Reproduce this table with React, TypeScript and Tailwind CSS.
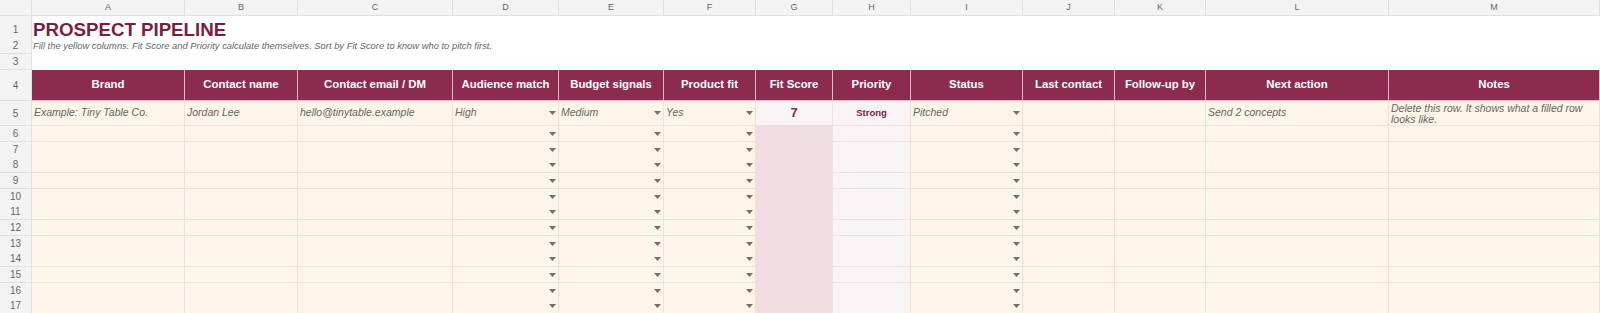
import React from "react";

const GRID =
  "grid grid-cols-[32px_153px_113px_155px_106px_105px_92px_77px_78px_112px_92px_91px_183px_211px]";

const letters = ["A", "B", "C", "D", "E", "F", "G", "H", "I", "J", "K", "L", "M"];

const headers = [
  "Brand",
  "Contact name",
  "Contact email / DM",
  "Audience match",
  "Budget signals",
  "Product fit",
  "Fit Score",
  "Priority",
  "Status",
  "Last contact",
  "Follow-up by",
  "Next action",
  "Notes",
];

// columns with a dropdown chip (D, E, F, I)
const dropdownCols = [3, 4, 5, 8];

function Arrow() {
  return (
    <svg width="7" height="4" viewBox="0 0 7 4" className="shrink-0">
      <polygon points="0,0 7,0 3.5,4" fill="#6f6f72" />
    </svg>
  );
}

function RowNum({ n }: { n: number | string }) {
  return (
    <div className="flex items-center justify-center bg-[#f3f3f3] border-r border-b border-[#e0e0e0] text-[10px] text-[#666]">
      {n}
    </div>
  );
}

function DataCell({ col, example, children }: { col: number; example?: boolean; children?: React.ReactNode }) {
  let bg = "bg-[#fdf5e7]";
  if (col === 6) bg = example ? "bg-[#f8f3f5]" : "bg-[#f0dde0]";
  if (col === 7) bg = "bg-[#f8f3f5]";
  return (
    <div className={`flex items-center min-w-0 border-r border-b border-[#f0dfe0] px-[2px] ${bg}`}>
      <div className="flex-1 min-w-0">{children}</div>
      {dropdownCols.includes(col) && <Arrow />}
    </div>
  );
}

const example = [
  "Example: Tiny Table Co.",
  "Jordan Lee",
  "hello@tinytable.example",
  "High",
  "Medium",
  "Yes",
  "",
  "",
  "Pitched",
  "",
  "",
  "Send 2 concepts",
  "",
];

// rows 6-17 alternate 16/15px so gridlines stay on whole pixels
const emptyRows: [number, string][] = [
  [6, "h-[16px]"],
  [7, "h-[15px]"],
  [8, "h-[16px]"],
  [9, "h-[16px]"],
  [10, "h-[15px]"],
  [11, "h-[16px]"],
  [12, "h-[16px]"],
  [13, "h-[15px]"],
  [14, "h-[16px]"],
  [15, "h-[16px]"],
  [16, "h-[15px]"],
  [17, "h-[16px]"],
];

export default function App() {
  return (
    <div className="w-[1600px] h-[313px] overflow-hidden bg-white font-['Liberation_Sans',Arial,sans-serif]">
      {/* column letters */}
      <div className={`${GRID} h-[16px] bg-[#f3f3f3]`}>
        <div className="border-r border-b border-[#e0e0e0]" />
        {letters.map((l) => (
          <div
            key={l}
            className="flex items-center justify-center border-r border-b border-[#e0e0e0] text-[9px] text-[#666]"
          >
            {l}
          </div>
        ))}
      </div>

      {/* title rows */}
      <div className={`${GRID} h-[22px]`}>
        <RowNum n={1} />
        <div className="col-span-13 flex items-center px-[1px] text-[18.7px] font-bold text-[#7a1e40] whitespace-nowrap">
          PROSPECT PIPELINE
        </div>
      </div>
      <div className={`${GRID} h-[16px]`}>
        <RowNum n={2} />
        <div className="col-span-13 flex items-center px-[1px] text-[9.4px] italic text-[#666] whitespace-nowrap">
          Fill the yellow columns. Fit Score and Priority calculate themselves. Sort by Fit Score to know who to pitch
          first.
        </div>
      </div>
      <div className={`${GRID} h-[16px]`}>
        <RowNum n={3} />
        <div className="col-span-13" />
      </div>

      {/* header row */}
      <div className={`${GRID} h-[31px]`}>
        <RowNum n={4} />
        {headers.map((h) => (
          <div
            key={h}
            className="flex items-center justify-center bg-[#8b2c4f] border-r border-b border-[#e3bccb] text-[11.4px] font-bold text-white whitespace-nowrap"
          >
            {h}
          </div>
        ))}
      </div>

      {/* example row */}
      <div className={`${GRID} h-[25px]`}>
        <RowNum n={5} />
        {example.map((v, i) => {
          if (i === 6)
            return (
              <DataCell key={i} col={i} example>
                <div className="text-center text-[13px] font-bold text-[#8b2c4f]">7</div>
              </DataCell>
            );
          if (i === 7)
            return (
              <DataCell key={i} col={i} example>
                <div className="text-center text-[9.5px] font-bold text-[#7a1e40]">Strong</div>
              </DataCell>
            );
          if (i === 12)
            return (
              <div
                key={i}
                className="border-r border-b border-[#f0dfe0] bg-[#fdf5e7] px-[2px] pt-[2px] text-[10.5px] leading-[11px] italic text-[#666]"
              >
                Delete this row. It shows what a filled row looks like.
              </div>
            );
          return (
            <DataCell key={i} col={i} example>
              <div className="truncate text-[10.5px] italic text-[#666]">{v}</div>
            </DataCell>
          );
        })}
      </div>

      {/* empty rows */}
      {emptyRows.map(([r, h]) => (
        <div key={r} className={`${GRID} ${h}`}>
          <RowNum n={r} />
          {letters.map((_, i) => (
            <DataCell key={i} col={i} />
          ))}
        </div>
      ))}
    </div>
  );
}
